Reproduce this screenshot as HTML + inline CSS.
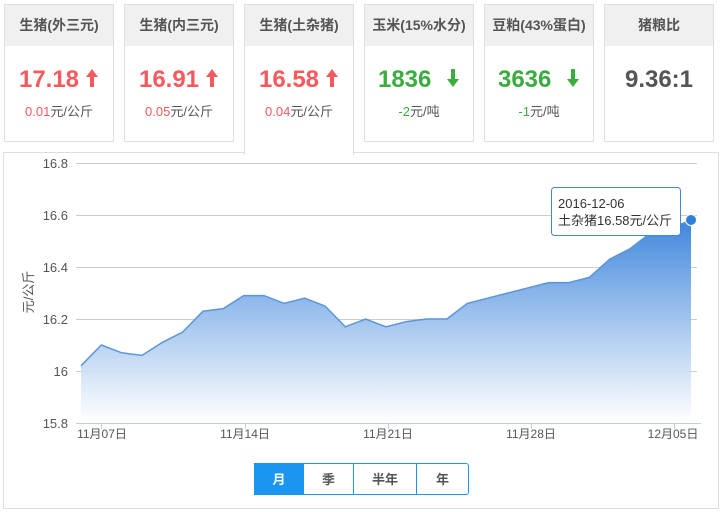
<!DOCTYPE html>
<html><head><meta charset="utf-8"><style>
body{margin:0;width:726px;height:512px;background:#fff;font-family:"Liberation Sans","Noto Sans CJK SC",sans-serif;position:relative;overflow:hidden}
.card{position:absolute;top:4px;width:108px;height:136px;border:1px solid #ddd;background:#fff;text-align:center}
.card .h{height:41px;background:#f0f0f0;line-height:41px;font-size:14px;font-weight:bold;color:#555}
.card .v{margin-top:19px;font-size:24px;font-weight:bold;height:30px;line-height:30px}
.card .c{margin-top:6px;font-size:13px;color:#555}
.red{color:#f55a5f}.green{color:#3aad3e}
.arr{display:inline-block;margin-left:6px;vertical-align:-1px}
.btn{position:absolute;top:463px;height:32px;line-height:32px;text-align:center;font-size:13px;font-weight:bold;color:#555;border:1px solid #1a96f0;box-sizing:border-box}
</style></head><body>
<div class="card" style="left:4px"><div class="h">生猪(外三元)</div><div class="v red">17.18<svg class="arr" width="14" height="20" viewBox="0 0 14 20"><path d="M7 1 L13 9 L9 9 L9 19 L5 19 L5 9 L1 9Z" fill="#f55a5f"/></svg></div><div class="c"><span class="red">0.01</span>元/公斤</div></div>
<div class="card" style="left:124px"><div class="h">生猪(内三元)</div><div class="v red">16.91<svg class="arr" width="14" height="20" viewBox="0 0 14 20"><path d="M7 1 L13 9 L9 9 L9 19 L5 19 L5 9 L1 9Z" fill="#f55a5f"/></svg></div><div class="c"><span class="red">0.05</span>元/公斤</div></div>
<div class="card" style="left:244px;height:150px;border-bottom:none;z-index:2"><div class="h">生猪(土杂猪)</div><div class="v red">16.58<svg class="arr" width="14" height="20" viewBox="0 0 14 20"><path d="M7 1 L13 9 L9 9 L9 19 L5 19 L5 9 L1 9Z" fill="#f55a5f"/></svg></div><div class="c"><span class="red">0.04</span>元/公斤</div></div>
<div class="card" style="left:364px"><div class="h">玉米(15%水分)</div><div class="v green">1836 <svg class="arr" style="margin-left:8px" width="14" height="20" viewBox="0 0 14 20"><path d="M7 19 L13 11 L9 11 L9 1 L5 1 L5 11 L1 11Z" fill="#3aad3e"/></svg></div><div class="c"><span class="green">-2</span>元/吨</div></div>
<div class="card" style="left:484px"><div class="h">豆粕(43%蛋白)</div><div class="v green">3636 <svg class="arr" style="margin-left:8px" width="14" height="20" viewBox="0 0 14 20"><path d="M7 19 L13 11 L9 11 L9 1 L5 1 L5 11 L1 11Z" fill="#3aad3e"/></svg></div><div class="c"><span class="green">-1</span>元/吨</div></div>
<div class="card" style="left:604px"><div class="h">猪粮比</div><div class="v" style="color:#555">9.36:1</div></div>
<div style="position:absolute;left:3px;top:152px;width:714px;height:355px;border:1px solid #ddd"></div>
<svg style="position:absolute;left:0;top:0" width="726" height="512">
<defs><linearGradient id="g" x1="0" y1="0" x2="0" y2="1"><stop offset="0" stop-color="#3f86dc"/><stop offset="1" stop-color="#fff" stop-opacity="0.9"/></linearGradient></defs>
<g stroke="#ccc" stroke-width="1">
<line x1="76" y1="163.5" x2="697" y2="163.5"/><line x1="76" y1="215.5" x2="697" y2="215.5"/><line x1="76" y1="267.5" x2="697" y2="267.5"/><line x1="76" y1="319.5" x2="697" y2="319.5"/><line x1="76" y1="371.5" x2="697" y2="371.5"/></g>
<path d="M81,365.8 L101.3,345 121.7,352.8 142,355.4 162.3,342.4 182.7,332 203,311.2 223.3,308.6 243.6,295.6 264,295.6 284.3,303.4 304.6,298.2 325,306 345.3,326.8 365.6,319 386,326.8 406.3,321.6 426.6,319 446.9,319 467.3,303.4 487.6,298.2 507.9,293 528.3,287.8 548.6,282.6 568.9,282.6 589.3,277.4 609.6,259.2 629.9,248.8 650.2,233.2 670.6,228 691,220.2 L691,423 L81,423Z" fill="url(#g)"/>
<polyline points="81,365.8 101.3,345 121.7,352.8 142,355.4 162.3,342.4 182.7,332 203,311.2 223.3,308.6 243.6,295.6 264,295.6 284.3,303.4 304.6,298.2 325,306 345.3,326.8 365.6,319 386,326.8 406.3,321.6 426.6,319 446.9,319 467.3,303.4 487.6,298.2 507.9,293 528.3,287.8 548.6,282.6 568.9,282.6 589.3,277.4 609.6,259.2 629.9,248.8 650.2,233.2 670.6,228 691,220.2" fill="none" stroke="#5a96d8" stroke-width="1.5"/>
<line x1="76" y1="423.5" x2="701" y2="423.5" stroke="#c0cfe0"/>
<g stroke="#c0cfe0"><line x1="101.5" y1="423" x2="101.5" y2="429"/><line x1="245.5" y1="423" x2="245.5" y2="429"/><line x1="388.5" y1="423" x2="388.5" y2="429"/><line x1="531.5" y1="423" x2="531.5" y2="429"/><line x1="674.5" y1="423" x2="674.5" y2="429"/></g>
<circle cx="691" cy="220" r="5.5" fill="#2f80dc" stroke="#fff" stroke-width="1"/>
<g font-size="13" fill="#555" text-anchor="end"><text x="68" y="168">16.8</text><text x="68" y="220">16.6</text><text x="68" y="272">16.4</text><text x="68" y="324">16.2</text><text x="68" y="376">16</text><text x="68" y="428">15.8</text></g>
<g font-size="12" fill="#555" text-anchor="middle"><text x="102" y="438">11月07日</text><text x="245" y="438">11月14日</text><text x="388" y="438">11月21日</text><text x="531" y="438">11月28日</text><text x="673" y="438">12月05日</text></g>
<text transform="translate(33,292) rotate(-90)" font-size="13" fill="#555" text-anchor="middle">元/公斤</text>
<rect x="551.5" y="187.5" width="129" height="48" rx="3" fill="#fff" stroke="#3f86dc"/>
<text x="558" y="208" font-size="13" fill="#333">2016-12-06</text>
<text x="558" y="225" font-size="13" fill="#333">土杂猪16.58元/公斤</text>
</svg>
<div class="btn" style="left:254px;width:50px;background:#1a96f0;color:#fff">月</div>
<div class="btn" style="left:303px;width:51px">季</div>
<div class="btn" style="left:353px;width:64px">半年</div>
<div class="btn" style="left:416px;width:53px;border-radius:0 3px 3px 0">年</div>
</body></html>
